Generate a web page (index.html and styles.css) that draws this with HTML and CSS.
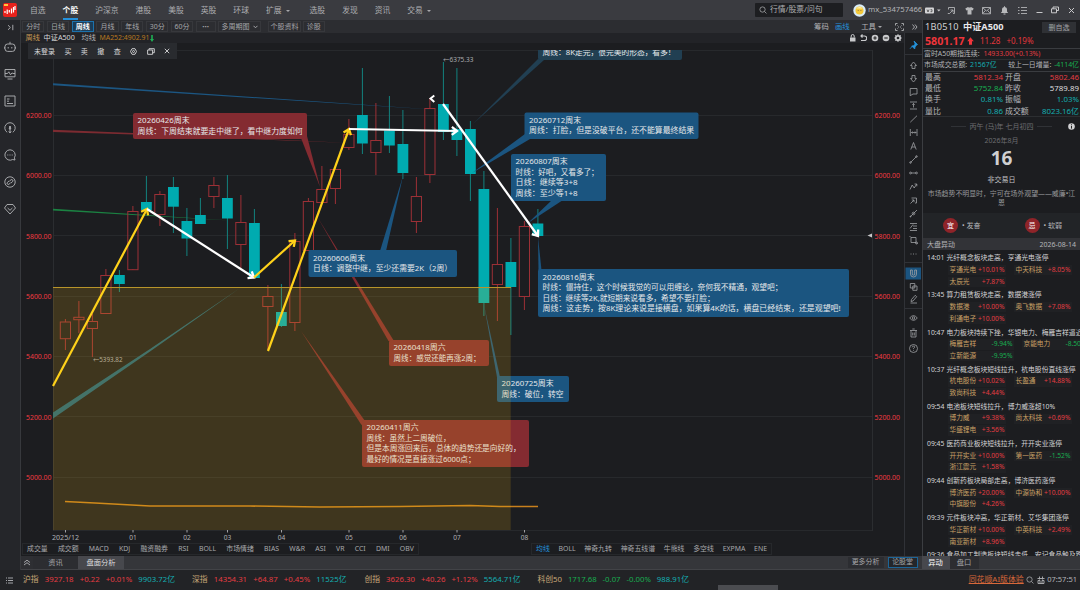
FILE: index.html
```html
<!DOCTYPE html>
<html lang="zh-CN">
<head>
<meta charset="utf-8">
<title>中证A500 周线</title>
<link rel="stylesheet" href="styles.css">
</head>
<body>
<svg class="defs" width="0" height="0">
  <defs>
    <symbol id="i-robot" viewBox="0 0 12 12"><path d="M6 3V.8M3.6 3h4.8A2.6 2.6 0 0 1 11 5.6v2.2a2.6 2.6 0 0 1-2.6 2.6H3.600A2.600 2.600 0 0 1 1 7.800V5.600A2.600 2.600 0 0 1 3.600 3zM4.200 6v1.500M7.800 6v1.500M.3 5.800v2M11.700 5.800v2"/></symbol>
    <symbol id="i-monitor" viewBox="0 0 12 12"><path d="M1 1.500h10v7.300H1zM3.500 11h5M1 5.500h2.500l1.300-1.700 1.700 3 1.500-2 .8.700H11"/></symbol>
    <symbol id="i-news" viewBox="0 0 12 12"><path d="M1 1h10v10H1zM3 4h2.500M3 6.200h2M3 8.500h6"/></symbol>
    <symbol id="i-gauge" viewBox="0 0 12 12"><path d="M3.200 10.300a5.200 5.200 0 1 1 5.600 0M6 4v7M4.800 9.300 6 11l1.200-1.700M6 4 5.200 7h1.600z"/></symbol>
    <symbol id="i-chat" viewBox="0 0 12 12"><path d="M6 .8a5.200 5.200 0 1 0 2.700 9.700l2.300.5-.6-2.200A5.200 5.200 0 0 0 6 .8zM3.300 6h1M5.500 6h1M7.700 6h1"/></symbol>
    <symbol id="i-link" viewBox="0 0 12 12"><circle cx="6" cy="6" r="5.200"/><path d="M5.300 5.200 7 3.800a1.200 1.200 0 0 1 1.500 1.900L7 7M6.700 6.800 5 8.200a1.200 1.200 0 0 1-1.500-1.900L5 5"/></symbol>
    <symbol id="i-gem" viewBox="0 0 12 12"><path d="M3 1.500h6L11.500 5 6 11 .5 5zM3.600 5 6 7.300 8.400 5"/></symbol>
    <symbol id="i-search" viewBox="0 0 10 10"><circle cx="4.400" cy="4.400" r="3.300"/><path d="m7 7 2.300 2.300"/></symbol>
  </defs>
</svg>
<div class="app">
  <header class="top">
    <div class="logo"><svg width="14" height="14" viewBox="0 0 14 14"><rect width="14" height="14" rx="2" fill="#e8221c"/><path d="M2 8v2M4.200 6.500V11M6.300 7v2.500M8.500 5.500v5M10.500 4v5.500M12 3v4" stroke="#fff" stroke-width="1.200"/><path d="M1 1h4v2H1z" fill="#ffc53d"/></svg></div>
    <nav class="nav">
      <span>自选</span><span class="on">个股</span><span>沪深京</span><span>港股</span><span>美股</span><span>英股</span><span>环球</span><span class="ext">扩展<i class="tri"></i></span><span>选股</span><span>发现</span><span>资讯</span><span>交易<i class="tri"></i></span>
    </nav>
    <div class="search"><svg class="ic" width="8" height="8"><use href="#i-search"/></svg>行情/股票/问句</div>
    <div class="user"><svg width="13" height="13" viewBox="0 0 13 13"><circle cx="6.500" cy="6.500" r="6.200" fill="#d9ecf7"/><circle cx="6.500" cy="6.500" r="4" fill="#f5c93a"/><path d="M3 4.500a4 3 0 0 1 7 0z" fill="#fff1b0"/><path d="M4.800 6.500h.8M7.500 6.500h.8" stroke="#654" stroke-width=".8"/></svg><span>mx_534757466</span></div>
    <div class="wins">
      <svg class="badge" width="17" height="9" viewBox="0 0 17 9"><rect x="0" y="1.500" width="9" height="6" rx="1" fill="#d5d5d7"/><path d="M2 3.500 3 6l1-2.500M5.500 3.700h1.500v2H5.500" stroke="#333" stroke-width=".7" fill="none"/><path d="m12 3.500 3.600 0-1.800 2z" fill="#c8c8ca"/></svg>
      <svg class="ic" width="9" height="9" viewBox="0 0 9 9"><path d="M1.500 3.500V1.500h6v6H6M.8 7.500h2M3.500 4h2.500v2.500M6 4 2.800 7.300"/></svg>
      <svg width="9" height="9" viewBox="0 0 9 9"><path d="M.3 2.500 3 1q1.500 1.200 3 0l2.700 1.500-1 2-1.200-.4V8.500h-4V4.100l-1.200.4z" fill="#b8b9bb"/></svg>
      <svg class="ic" width="9" height="9" viewBox="0 0 9 9"><path d="M.5 1.500h8v6.300h-8zM.5 1.500 4.500 5l4-3.500M.5 7.800l3-3.500M8.500 7.800l-3-3.500"/></svg>
      <svg width="9" height="9" viewBox="0 0 9 9"><path d="M.8 7 2 5.500V3.500a2.500 2.500 0 0 1 5 0v2L8.200 7zM3.500 7.500h2v1h-2zM4 .3h1v1H4z" fill="#b8b9bb"/></svg>
      <svg class="ic" width="9" height="9" viewBox="0 0 9 9"><path d="M0 1.500h1.500M3 1.500h6M0 4.500h1.500M3 4.500h6M0 7.500h1.500M3 7.500h6"/></svg>
      <svg class="ic lt" width="7" height="9" viewBox="0 0 7 9"><path d="M.5 6.500h6"/></svg>
      <svg class="ic lt" width="8" height="8" viewBox="0 0 8 8"><path d="M.5 2.800h5v4h-5zM2 2.800V1h5.500v3.500h-2"/></svg>
      <svg class="ic lt" width="7" height="7" viewBox="0 0 7 7"><path d="m1 1 5 5M6 1 1 6"/></svg>
    </div>
  </header>

  <div class="body">
    <aside class="side">
      <svg class="ic fold" width="7" height="7" viewBox="0 0 7 7"><path d="m1 1.200 2.400 2.300L1 5.800M5.800.8v5.400"/></svg>
      <svg class="ic" width="12" height="12"><use href="#i-robot"/></svg>
      <svg class="ic" width="12" height="12"><use href="#i-monitor"/></svg>
      <svg class="ic" width="12" height="12"><use href="#i-news"/></svg>
      <svg class="ic" width="12" height="12"><use href="#i-gauge"/></svg>
      <svg class="ic" width="12" height="12"><use href="#i-chat"/></svg>
      <svg class="ic" width="12" height="12"><use href="#i-link"/></svg>
      <svg class="ic" width="12" height="12"><use href="#i-gem"/></svg>
    </aside>

    <div class="work">
      <div class="upper">
        <main class="center">
          <div class="periods">
            <div class="plist"><b>分时</b><b>日线</b><b class="on">周线</b><b>月线</b><b>年线</b><b>30分</b><b>60分</b><b class="dots">•••</b><b class="wide">多周期图<svg class="ic" width="5" height="4" viewBox="0 0 5 4"><path d="m.5.8 2 2 2-2"/></svg></b><b class="info">个股资料</b><b>诊股</b></div>
            <div class="ptools"><span class="chip-dist">筹码</span><span class="blue draw">画线</span><span class="kit">工具<i class="tri small"></i></span>
              <svg class="ic full" width="9" height="8" viewBox="0 0 9 8"><path d="M.5 2.500v-2h2M6.500.5h2v2M8.500 5.500v2h-2M2.500 7.500h-2v-2M2.500 2.500l1 1M6.500 2.500l-1 1M2.500 5.500l1-1M6.500 5.500l-1-1"/></svg>
              <svg class="ic" width="6" height="8" viewBox="0 0 6 8"><path d="m.5 1.500 2 2.500-2 2.500M3 1.500 5 4 3 6.500"/></svg></div>
          </div>
          <div class="stage">
            <div class="chartcol">
              <div class="legend"><span class="gold">周线</span><span class="w">中证A500</span><span class="g">均线</span><span class="ma">MA252:4902.91</span><svg width="4" height="7" viewBox="0 0 4 7"><path d="M1.200 0h1.600v4H4L2 7 0 4h1.200z" fill="#1fae54"/></svg>
                <div class="ltools">
                  <svg width="7" height="8" viewBox="0 0 7 8"><path d="M1 3.500h5.500V7.500H1z" fill="#c9cacc"/><path d="M2.200 3.500V2a1.500 1.500 0 0 1 3 0v1.500" fill="none" stroke="#c9cacc"/></svg>
                  <svg width="7" height="8" viewBox="0 0 7 8"><path d="M1 2h3.500a2 2 0 0 1 0 4.500H1M2.500.5 1 2l1.500 1.500" fill="none" stroke="#c9cacc" stroke-width="1.200"/></svg>
                  <svg width="8" height="8" viewBox="0 0 8 8"><circle cx="4" cy="4" r="3.300" fill="#c9cacc"/><path d="M2.300 4h3.400M4 2.300v3.400" stroke="#222" stroke-width="1.100"/></svg>
                  <svg width="8" height="8" viewBox="0 0 8 8"><circle cx="4" cy="4" r="3.300" fill="#c9cacc"/><path d="M2.300 4h3.400" stroke="#222" stroke-width="1.100"/></svg>
                  <svg width="8" height="8" viewBox="0 0 8 8"><circle cx="4" cy="4" r="2.200" fill="none" stroke="#c9cacc" stroke-width="1.700"/><path d="M4 .3v1M4 6.700v1M.3 4h1M6.700 4h1M1.400 1.400l.7.700M5.900 5.900l.7.700M1.400 6.600l.7-.7M5.900 2.100l.7-.7" stroke="#c9cacc" stroke-width="1.200"/></svg>
                </div>
              </div>
              <div class="plot">
                <svg id="chart" width="884" height="500" viewBox="21 43 884 500"></svg>
                <div class="trade"><span>未登录</span><span>买</span><span>卖</span><span>撤</span><span>查</span>
                  <svg class="ic lt" width="7" height="7" viewBox="0 0 7 7"><path d="M2 .7h3l1.500 2.800L5 6.300H2L.5 3.500z"/><circle cx="3.500" cy="3.500" r="1"/></svg>
                  <svg class="ic lt" width="8" height="7" viewBox="0 0 8 7"><path d="M.6 2h5v4.300h-5zM2 2V.7h5.300v4H5.600"/></svg>
                  <svg class="ic lt" width="6" height="6" viewBox="0 0 6 6"><path d="m.8.8 4.400 4.400M5.200.8.8 5.200"/></svg>
                </div>
              </div>
              <div class="indicators">
                <div class="ind a"><span>成交量</span><span>成交额</span><span>MACD</span><span>KDJ</span><span>融资融券</span><span>RSI</span><span>BOLL</span><span>市场情绪</span><span>BIAS</span><span>W&amp;R</span><span>ASI</span><span>VR</span><span>CCI</span><span>DMI</span><span>OBV</span></div>
                <div class="ind b"><span class="blue">均线</span><span>BOLL</span><span>神奇九转</span><span>神奇五线谱</span><span>牛熊线</span><span>多空线</span><span>EXPMA</span><span>ENE</span></div>
              </div>
            </div>
            <svg class="tools" width="18" height="523" viewBox="904 33 18 523">
              <path d="M904.500 33v523" stroke="#303237"/>
              <path d="M905 54.500h17M905 262.500h17M905 308.500h17" stroke="#303237"/>
              <path d="m914 41 3.500 3.500-1 .5-1.500 2-.3 2-3-3 2-.3 1.500-1.700zM912.500 46l-2.500 2.800" fill="#2593dc" stroke="#2593dc" stroke-width=".8"/>
              <rect x="905.500" y="267.500" width="15.500" height="12" fill="#1b5480"/>
              <g class="ln">
                <path d="m913.500 62 3 3.500h-1.500v3h-3v-3h-1.500z"/>
                <path d="m913.500 82 3-3.500h-1.500v-3h-3v3h-1.500z"/>
                <path d="M910.200 88.500h6.800v5.500h-4l-2.800 1.700z"/>
                <path d="M910 102h7M910 109h7M913.500 103.500v4M912.300 104.800l1.200-1.300 1.200 1.300"/>
                <path d="m910.300 122.200 6.700-6.500"/>
                <path d="M910.300 129v7M917 129v7M911.500 132.500h4.500M912.500 131.500l-1 1 1 1M915 131.500l1 1-1 1"/>
                <path d="m910.800 149.500 2.700-7 2.700 7M911.800 147h3.400"/>
                <path d="m910.500 162.500 6-6"/><circle cx="910.500" cy="162.500" r=".8"/><circle cx="916.500" cy="156.500" r=".8"/>
                <path d="M911 173h5"/><circle cx="910.500" cy="173" r=".9"/><circle cx="916.500" cy="173" r=".9"/>
                <path d="m910 189.500 2.200-4.500 2 3 2.500-4M914.500 184h2.300v2.300"/>
                <path d="M911.500 198h5v5h-1.500M910.500 203.500l3.500-3.500M911.800 200h2.200v2.200"/>
                <path d="m910 217 7-7"/><circle cx="913.500" cy="213.500" r="1.300"/><circle cx="910.500" cy="216.500" r=".5"/>
                <path d="M910 223.500h7M913 226h4M913 228.500h4M910 230.500h7M910 228.500l3-4"/>
                <path d="M911 237.500h5v5h-5zM916 242.500l1.500 1.500M909.500 236l1.500 1.500"/><circle cx="916.500" cy="243" r="1"/>
                <path d="M910.500 254h1M913 254h1M915.500 254h1"/>
                <path d="M910.500 270v4a3 3 0 0 0 6 0v-4h-1.800v4a1.200 1.200 0 0 1-2.400 0v-4z"/>
                <path d="M910.300 283.500h4.500v4.500h-4.500zM912.800 286h4.200v4.300h-4.200z"/>
                <path d="m911 301.500.5-2 3.700-4.200 1.500 1.400-3.700 4.300zM910.500 303h6.500"/>
                <path d="M909.700 318q3.800-4.700 7.600 0-3.800 4.700-7.600 0z"/><circle cx="913.500" cy="318" r="1.200"/>
                <path d="M910 330.500h7M911 330.500v6.500h5v-6.500M912.300 329h2.400M912.700 332.500v3M914.300 332.500v3"/>
                <circle cx="913.500" cy="348.500" r="4"/><path d="M912.300 347.300q.1-1.200 1.200-1.200t1.200 1q0 .6-1.200 1.300v.7M913.500 350.200v.7"/>
              </g>
            </svg>
          </div>
        </main>

        <section class="quote">
          <div class="qname"><span class="code">1B0510</span><span class="nm">中证A500</span><button>删自选</button></div>
          <div class="qprice"><strong>5801.17</strong><svg width="7" height="8" viewBox="0 0 7 8"><path d="m3.500.3 3.300 3.900H5v3.500H2V4.200H.2z" fill="#f0353b"/></svg><span>11.28</span><span>+0.19%</span></div>
          <div class="qline"><span>富时A50期指连续:</span><span class="red">14933.00(+0.13%)</span></div>
          <div class="qline two"><span>市场成交总额: <em class="cy">21567亿</em></span><span>较上一日增量: <em class="gr">-4114亿</em></span></div>
          <div class="qgrid">
            <span>最高</span><em class="red">5812.34</em><span>开盘</span><em class="red">5802.46</em>
            <span>最低</span><em class="gr">5752.84</em><span>昨收</span><em class="wh">5789.89</em>
            <span>换手</span><em class="cy">0.81%</em><span>振幅</span><em class="cy">1.03%</em>
            <span>量比</span><em class="cy">0.86</em><span>成交额</span><em class="cy">8023.16亿</em>
          </div>
          <div class="cal">
            <div class="lunar"><i></i>丙午 (马)年 七月初四<i></i><svg class="tip" width="7" height="7" viewBox="0 0 7 7"><circle cx="3.500" cy="3.500" r="3.300" fill="#d0d0d2"/><path d="M3.500 1.300v1M3.500 3v2.600" stroke="#222"/></svg></div>
            <div class="ym">2026年8月</div>
            <div class="day">16</div>
            <div class="non">非交易日</div>
            <div class="say">市场趋势不明显时，宁可在场外观望——威廉•江恩</div>
          </div>
          <div class="luck"><div><b>宜</b>• 发奋</div><div><b>忌</b>• 软弱</div></div>
          <div class="mhead"><span>大盘异动</span><span>2026-08-14</span></div>
          <div class="feed" id="feed"></div>
        </section>
      </div>

      <div class="tabs">
        <span class="up"><svg class="ic" width="8" height="7" viewBox="0 0 8 7"><path d="m1 3.500 3-2.300 3 2.300M1 6l3-2.300L7 6"/></svg></span>
        <span class="t1">资讯</span><span class="t2">盘面分析</span>
        <span class="more">更多分析</span><span class="forum">论股堂</span>
        <span class="t3">异动</span><span class="t4">盘口</span>
      </div>
    </div>
  </div>

  <footer class="status">
    <svg class="ic menu" width="7" height="7" viewBox="0 0 7 7"><path d="M0 1h1M2 1h5M0 3.500h1M2 3.500h5M0 6h1M2 6h5"/></svg>
    <div class="ix x1 red"><b>沪指</b><span>3927.18</span><span>+0.22</span><span>+0.01%</span><em class="cy">9903.72亿</em></div>
    <div class="ix x2 red"><b>深指</b><span>14354.31</span><span>+64.87</span><span>+0.45%</span><em class="cy">11525亿</em></div>
    <div class="ix x3 red"><b>创指</b><span>3626.30</span><span>+40.26</span><span>+1.12%</span><em class="cy">5564.71亿</em></div>
    <div class="ix x4 gr"><b>科创50</b><span>1717.68</span><span>-0.07</span><span>-0.00%</span><em class="cy">988.91亿</em></div>
    <div class="right"><a>同花顺AI版体验</a><svg class="ic" width="8" height="8"><use href="#i-search"/></svg><svg class="ic" width="8" height="8" viewBox="0 0 8 8"><path d="M.5 2.500h7M2.500.5v3M5.500.5v3M1 4.500h2v3H1zM5 4.500h2v3H5zM3 7.500h2"/></svg><span>07:57:51</span></div>
    <i class="thumb"></i>
  </footer>
</div>
<script src="app.js"></script>
</body>
</html>
```
FILE: styles.css
```css
* { box-sizing: border-box; }
body {
  margin: 0; width: 1080px; height: 590px; overflow: hidden;
  background: #1c1d20; color: #b4b5b8;
  font-family: "Noto Sans", "Noto Sans CJK SC", sans-serif;
  font-size: 7.8px; line-height: 1; white-space: nowrap;
}
b { font-weight: 400; }
em, i { font-style: normal; }
svg { display: block; flex: none; }
.defs { position: absolute; }
.ic { fill: none; stroke: #acadb0; stroke-width: .95; }
.ic.lt { stroke: #d0d0d2; }
.red { color: #e23c42; }
.gr { color: #18ad50; }
.cy { color: #14adb1; }
.wh { color: #dcdcde; }
.blue { color: #2491dc; }
.app { display: flex; flex-direction: column; height: 590px; }

.top { height: 20px; display: flex; align-items: center; background: #3a3b40; }
.logo { width: 30px; padding-left: 3px; }
.nav { display: flex; gap: 17px; width: 725px; height: 20px; color: #adaeb1; }
.nav span { display: flex; align-items: center; padding-top: 1px; height: 20px; }
.nav .ext { margin-right: 1px; }
.nav .on { color: #fff; font-weight: 700; border-bottom: 2px solid #2491dc; padding-top: 3px; }
.tri { width: 0; height: 0; border: 2.200px solid transparent; border-top: 2.800px solid #a7a8ab; border-bottom: 0; margin: 0 2px 0 4px; }
.tri.small { margin: 0 0 0 2px; }
.search { width: 88px; height: 14px; background: #1d1e21; border-radius: 1px; display: flex; align-items: center; gap: 3px; padding-left: 4px; color: #aeafb2; font-size: 7.800px; }
.user { display: flex; align-items: center; gap: 2px; margin-left: 10px; width: 72px; color: #b4b5b8; font-size: 7.700px; }
.wins { flex: 1; display: flex; align-items: center; justify-content: space-between; padding: 0 5px 0 0; }
.badge { margin-right: -4px; }

.body { display: flex; height: 550px; }
.side { width: 21px; background: #25262a; border-right: 1px solid #37393d; display: flex; flex-direction: column; align-items: center; gap: 15px; }
.fold { margin: 4px 0 -5px; }
.work { width: 1059px; display: flex; flex-direction: column; }
.upper { display: flex; height: 536px; }
.center { width: 901px; }
.periods { height: 13px; background: #2c2d31; display: flex; align-items: center; justify-content: space-between; padding: 0 4px 0 1px; }
.plist { display: flex; gap: 2.500px; }
.plist b { height: 11px; width: 22.300px; border: 1px solid #37383c; display: flex; align-items: center; justify-content: center; gap: 3px; font-size: 7px; color: #a5a6a9; }
.plist .on { border-color: #1c72ad; color: #fff; font-weight: 700; background: #1b3d58; }
.plist .dots { width: 20px; font-size: 6px; }
.plist .wide { width: 43px; }
.plist .info { width: 33px; margin-left: 4.500px; }
.plist b:last-child { margin-left: -1px; }
.ptools { display: flex; align-items: center; font-size: 7.400px; }
.ptools span { display: flex; align-items: center; }
.ptools .draw { margin: 0 11.500px 0 6px; }
.ptools .full { margin: 0 8px 0 13px; }
.stage { display: flex; height: 523px; }
.chartcol { width: 883px; }
.legend { height: 10px; background: #222327; display: flex; align-items: center; padding-left: 4.500px; font-size: 7.200px; }
.legend .gold { color: #c99a55; width: 18px; }
.legend .w { color: #d8d8da; width: 38px; }
.legend .g { width: 18px; }
.legend .ma { color: #b87820; font-size: 6.900px; margin-right: .5px; }
.ltools { width: 53px; display: flex; justify-content: space-between; margin: 0 2px 0 auto; }
.plot { height: 500px; position: relative; overflow: hidden; }
.trade { position: absolute; left: 7px; top: 0; width: 149px; height: 16px; background: #292b2f; color: #d8d8da; display: flex; align-items: center; justify-content: space-between; padding: 0 7px 0 6px; font-size: 7px; }
.indicators { height: 13px; display: flex; gap: 112px; padding-left: 1px; }
.ind { display: flex; height: 12px; align-items: center; justify-content: space-between; border: 1px solid #26282b; font-size: 6.900px; color: #a8a9ac; }
.ind.a { width: 397px; padding: 0 4px; }
.ind.b { width: 241px; padding: 0 4px; }
.ln { fill: none; stroke: #a0a1a4; stroke-width: .8; }

.quote { width: 158px; border-left: 1px solid #3b3d41; overflow: hidden; height: 536px; }
.qname { height: 14px; display: flex; align-items: center; padding-left: 2px; font-size: 9.200px; color: #d0d0d2; }
.qname .code { width: 38px; letter-spacing: .25px; }
.qname .nm { font-weight: 700; color: #e8e8ea; width: 79px; }
.qname button { width: 34px; height: 11px; padding: 0; border: 0; background: #2f3135; color: #a2a3a6; font: inherit; font-size: 7px; }
.qprice { height: 15px; display: flex; align-items: center; padding-left: 2px; color: #e2363c; border-bottom: 1px solid #3a3c40; font-size: 8px; }
.qprice strong { font-size: 10.700px; width: 42px; color: #f0353b; }
.qprice span { margin-left: 6px; }
.qline { height: 11px; display: flex; align-items: center; gap: 4px; padding: 0 0 0 1px; font-size: 6.900px; border-bottom: 1px solid #2c2e31; }
.qline.two { justify-content: space-between; padding-right: 1px; height: 12px; border-color: #3a3c40; }
.qline.two em { margin-left: 1px; }
.qgrid { height: 45px; display: grid; grid-template-columns: 30px 48px 35px 41px; grid-auto-rows: 11.300px; align-items: center; padding: 0 2px; border-bottom: 1px solid #2c2e31; font-size: 7.900px; }
.qgrid em { text-align: right; }
.qgrid :nth-child(4n + 3) { padding-left: 2px; }
.cal { height: 96px; display: flex; flex-direction: column; align-items: center; color: #6c6d71; font-size: 7px; padding-top: 6px; }
.lunar { display: flex; align-items: center; gap: 4px; position: relative; width: 100%; justify-content: center; }
.lunar i { width: 15px; height: 1px; background: #303236; }
.tip { position: absolute; right: 5px; top: 0; }
.ym { margin-top: 7px; }
.day { font-size: 19px; font-weight: 700; color: #cfcfd1; margin-top: 5px; }
.non { color: #c0c0c2; margin-top: 8px; }
.say { color: #96979a; white-space: normal; text-align: center; width: 150px; line-height: 9.500px; margin-top: 5.500px; font-size: 6.900px; }
.luck { height: 25px; background: #222427; display: flex; padding-left: 20px; align-items: center; font-size: 7px; overflow: hidden; }
.luck div { flex: none; width: 81.500px; display: flex; align-items: center; gap: 4px; }
.luck div + div { width: 50px; }
.luck b { width: 15px; height: 15px; border-radius: 50%; background: #8f2429; color: #fff; display: flex; align-items: center; justify-content: center; }
.mhead { height: 12px; background: #323337; display: flex; align-items: center; justify-content: space-between; padding: 0 4px; font-size: 7px; }
.feed { padding: 2.500px 0 0 4px; }
.ev { height: 37.150px; }
.ev h4 { margin: 0; height: 12.500px; font-size: 6.800px; font-weight: 400; color: #d4d4d6; display: flex; align-items: center; }
.ev h4 span { width: 19.500px; flex: none; }
.chips { display: grid; grid-template-columns: 58px 58px; column-gap: 8px; row-gap: 1.500px; padding-left: 21px; }
.chips.far { grid-template-columns: 66px 66px; }
.chip { height: 10.300px; background: #202124; display: flex; align-items: center; justify-content: space-between; padding: 0 1.500px; font-size: 6.700px; color: #c9a065; }

.tabs { height: 14px; background: #35363a; display: flex; align-items: center; font-size: 7.300px; color: #a5a6a9; border-bottom: 1px solid #424347; }
.tabs span { height: 13px; display: flex; align-items: center; justify-content: center; }
.up { width: 12px; background: #2e2f33; }
.t1 { width: 45px; background: #2c2d31; }
.t2 { width: 46px; background: #47484d; color: #dcdcde; }
.tabs .more { width: 36px; height: 11px; background: #2c2d31; margin-left: 723.500px; font-size: 6.900px; }
.tabs .forum { width: 30px; height: 11px; border: 1px solid #1c6598; margin: 0 4px 0 4px; font-size: 6.900px; background: #24262a; }
.t3 { width: 28px; background: #47484d; color: #fff; }
.t4 { width: 29px; background: #2c2d31; }

.status { height: 20px; background: #222326; display: flex; padding: 4.500px 3px 0 6px; position: relative; font-size: 7.800px; }
.menu { margin: 2px 10px 0 0; }
.ix { display: flex; justify-content: space-between; height: 10px; align-items: center; margin-right: 17px; }
.ix b { color: #c9a878; }
.x1 { width: 152px; }
.x2 { width: 154.500px; margin-right: 18px; }
.x3 { width: 156px; }
.x4 { width: 151.500px; }
.right { flex: 1; display: flex; justify-content: flex-end; align-items: center; gap: 2.500px; height: 10px; font-size: 7.500px; }
.right a { color: #d8683a; text-decoration: underline; font-size: 7.900px; }
.thumb { position: absolute; left: 718px; bottom: 0; width: 60px; height: 5px; background: #4b4c50; }

#chart text { font-family: "Noto Sans", "Noto Sans CJK SC", sans-serif; }
```
FILE: app.js
```js
const out = [];
const line = (x1, y1, x2, y2, c, w) => out.push(`<path d="M${x1} ${y1}L${x2} ${y2}" stroke="${c}" stroke-width="${w || 1}" fill="none"/>`);
const poly = (p, c) => out.push(`<polygon points="${p}" fill="${c}"/>`);
const text = (x, y, s, c, size, w) => out.push(`<text x="${x}" y="${y}" fill="${c}" font-size="${size}"${w ? ` textLength="${w}" lengthAdjust="spacingAndGlyphs"` : ''}>${s}</text>`);

// Grid and price axis
[50.5, 115.5, 175.5, 235.5, 296.5, 356.5, 416.5, 477.5, 530.5].forEach(y => line(53, y, 872, y, '#27292c'));
[53.5, 872.5].forEach(x => line(x, 50, x, 531, '#2b2d30'));
['6200', '6000', '5800', '5600', '5400', '5200', '5000'].forEach((p, i) => {
  const y = 117.8 + i * 60.4;
  text(26, y, p + '.00', '#f03a41', 7.1, 25.5);
  text(874.5, y, p + '.00', '#f03a41', 7.1, 25.5);
});
poly('872,233.500 872,237.500 867.500,235.500', '#c8c8ca');

// Callout pointers that run off the left edge
poly('53,83.200 53,85.200 440,110', '#1c5682');
poly('53,129.800 53,132 133,134.500 350,143 133,133', '#7c2b31');
poly('53,208.700 53,210.500 230,220.500', '#1b8242');
poly('53,412.500 53,418.500 150,351.500 240,288 150,349', '#22657a');

// Weekly candles: [direction, body top, body bottom, high, low]
const candles = [
  ['r', 322, 338.7, 319, 350], ['r', 317.3, 319.7, 301, 333], ['r', 321.5, 328.5, 314, 357], ['r', 275.5, 313.5, 269, 313],
  ['t', 275, 284, 270, 292], ['r', 211.5, 269.7, 206, 269], ['t', 202, 210, 176, 210], ['r', 194.5, 214.5, 191, 226],
  ['t', 187, 206.7, 177, 233], ['t', 221, 238.5, 208, 256], ['t', 215, 224, 198, 224], ['r', 185.5, 196.5, 177, 208],
  ['t', 198, 218.5, 175, 249], ['r', 222.5, 244.5, 195, 268], ['t', 223, 278, 209, 278], ['r', 296.5, 306.5, 285, 350],
  ['t', 312, 326, 284, 327], ['r', 241.5, 322.5, 233, 331], ['r', 201.5, 250.5, 198, 250], ['r', 189.5, 202.5, 166, 202],
  ['r', 169.5, 188.5, 169, 204], ['r', 134.5, 147.5, 119, 150], ['t', 115, 143.5, 68, 154], ['r', 140.5, 152.5, 103, 175],
  ['t', 130.5, 145.5, 96, 153], ['t', 144, 173, 110, 179], ['r', 196.5, 221.5, 177, 233], ['r', 108.5, 174.5, 98, 183],
  ['t', 104, 132, 62, 140], ['t', 129, 140, 68, 156], ['t', 129, 174, 121, 201], ['t', 189, 303, 171, 316],
  ['r', 264.5, 284.5, 208, 321], ['t', 262, 287, 238, 335], ['r', 226.5, 296.5, 221, 310], ['t', 223.5, 236, 209, 236]
];
candles.forEach(([k, a, b, h, l], i) => {
  const x = 65.4 + i * 13.5;
  if (k === 't') {
    line(x, h, x, l, '#12827f');
    out.push(`<rect x="${x - 5.4}" y="${a}" width="10.8" height="${b - a}" fill="#00abb0"/>`);
  } else {
    line(x, h, x, a, '#9c3036');
    line(x, b, x, l, '#9c3036');
    out.push(`<rect x="${x - 5.1}" y="${a}" width="10.2" height="${b - a}" fill="none" stroke="#9c3036"/>`);
  }
});
text(443, 61.8, '←6375.33', '#a8a9ac', 6.2, 30.5);
text(93, 362.3, '←5393.82', '#a8a9ac', 6.2, 29.5);

// Callouts: box, pointer, lines of [text, width]
const BLUE = '#1b5580', RED = '#842b31';
const note = (x, y, w, h, c, tail, rows, top) => {
  poly(tail, c);
  out.push(`<rect x="${x}" y="${y}" width="${w}" height="${h}" rx="2" fill="${c}"/>`);
  rows.forEach(([s, tw], i) => text(x + 4.6, (top || y + 10.3) + i * 10.45, s, '#e6e8ea', 7.8, tw));
};
out.push('<clipPath id="top"><rect x="500" y="50" width="200" height="20"/></clipPath><g clip-path="url(#top)">');
note(538, 40, 144, 20, '#213f52', '0,0', [['周线：8K走完，很完美的形态，看多！', 133]], 55);
out.push('</g>');
poly('538,59 544,60 473,124', '#213f52');
note(133, 113, 174, 26, RED, '301,138 307,136 320,187', [['20260426周末', 52], ['周线：下周结束就要走中继了，看中继力度如何', 165]]);
note(524.5, 112.5, 174, 26.5, BLUE, '525,134 530,139 472,173', [['20260712周末', 52], ['周线：打脸，但是没破平台，还不能算最终结果', 165]]);
note(511, 154, 95, 47, BLUE, '552,200 563,200 528,223', [['20260807周末', 52], ['时线：好吧，又看多了；', 83], ['日线：继续等3+8', 62], ['周线：至少等1+8', 62]]);
note(389, 340, 100, 26, RED, '388.500,341 394,341 318,218', [['20260418周六', 52], ['周线：感觉还能再涨2周；', 87]]);
note(308.5, 250, 148.5, 27, BLUE, '380,251 386,251 403,176', [['20260606周末', 52], ['日线：调整中继，至少还需要2K（2周）', 139]], 261);
note(538, 269, 311, 48, BLUE, '538.500,270 541.500,270 538,237', [['20260816周末', 52], ['时线：僵持住，这个时候我觉的可以用缠论，奈何我不精通，观望吧；', 240], ['日线：继续等2K,就短期来说看多，希望不要打脸；', 172], ['周线：这走势，按8K理论来说是接横盘，如果算4K的话，横盘已经结束，还是观望吧!', 298]], 280);
note(497, 376, 72, 26, BLUE, '497.500,380 500,377 484,305', [['20260725周末', 52], ['周线：破位，转空', 62]]);
note(362, 420, 167, 47, RED, '361.500,425 365,421 301,331', [['20260411周六', 52], ['周线：虽然上二周破位，', 84], ['但是本周涨回来后，总体的趋势还是向好的，', 154], ['最好的情况是直接涨过6000点；', 109]]);

// Moving average and the highlighted price zone
out.push('<path d="M65 501.500 95 503 150 506 250 506 320 507 400 506.500 470 505.500 500 506.500 538 506.500" fill="none" stroke="#c8801c" stroke-width="1.600"/>');
out.push('<rect x="53" y="287.500" width="457.700" height="242.500" fill="#ffbe14" fill-opacity=".155"/>');
line(53, 287.5, 511, 287.5, '#b8952a', 1.2);

// Trend arrows
const arrow = (x1, y1, x2, y2, c) => {
  line(x1, y1, x2, y2, c, 2.2);
  const a = Math.atan2(y2 - y1, x2 - x1), p = d => `${x2 - 6.5 * Math.cos(a + d)} ${y2 - 6.5 * Math.sin(a + d)}`;
  out.push(`<path d="M${p(.65)}L${x2} ${y2}L${p(-.65)}" fill="none" stroke="${c}" stroke-width="2.300"/>`);
};
arrow(53, 386, 147, 209, '#ffd21a');
arrow(147, 209, 254, 277.5, '#fff');
arrow(254, 277.5, 295, 240.5, '#ffd21a');
arrow(268, 351, 349, 129, '#ffd21a');
arrow(349, 129, 457, 131, '#fff');
arrow(443, 104, 538, 236, '#fff');
out.push('<path d="M434.300 95.500 430.500 98.500 434.300 102" fill="none" stroke="#fff" stroke-width="2"/>');

// Month axis
[['2025/12', 65.5, 27], ['01', 133, 7.5], ['02', 187, 7.5], ['03', 227.5, 7.5], ['04', 281.5, 7.5], ['05', 349, 7.5], ['06', 403, 7.5], ['07', 457, 7.5], ['08', 524.5, 7.5]].forEach(([s, x, w]) => {
  line(x, 530, x, 532.5, '#a0a1a4');
  text(x - w / 2, 540, s, '#b0b1b4', 6.8, w);
});
document.getElementById('chart').innerHTML = out.join('');

// Market events
const events = [
  ['14:01', '光纤概念板块走高，亨通光电涨停', '亨通光电', '+10.01%', '中天科技', '+8.05%', '太辰光', '+7.87%'],
  ['13:45', '算力租赁板块走高，数据港涨停', '数据港', '+10.00%', '奥飞数据', '+7.08%', '利通电子', '+10.00%'],
  ['10:47', '电力板块持续下挫，华银电力、梅雁吉祥逼近跌停', '梅雁吉祥', '-9.94%', '京能电力', '-8.50%', '立新能源', '-9.95%'],
  ['10:37', '光纤概念板块短线拉升，杭电股份直线涨停', '杭电股份', '+10.02%', '长盈通', '+14.88%', '致尚科技', '+4.44%'],
  ['09:54', '电池板块短线拉升，博力威涨超10%', '博力威', '+9.38%', '尚太科技', '+0.69%', '华盛锂电', '+3.56%'],
  ['09:45', '医药商业板块短线拉升，开开实业涨停', '开开实业', '+10.00%', '第一医药', '-1.52%', '浙江震元', '+1.58%'],
  ['09:44', '创新药板块局部走高，博济医药涨停', '博济医药', '+20.00%', '中源协和', '+10.00%', '中旗股份', '+4.26%'],
  ['09:39', '元件板块冲高，华正新材、艾华集团涨停', '华正新材', '+10.00%', '中英科技', '+2.49%', '南亚新材', '+8.96%'],
  ['09:36', '食品加工制造板块短线走低，安记食品触及跌停']
];
document.getElementById('feed').innerHTML = events.map(([t, title, ...c]) => {
  let chips = '';
  for (let i = 0; i < c.length; i += 2) chips += `<div class="chip"><span>${c[i]}</span><span class="${c[i + 1][0] === '-' ? 'gr' : 'red'}">${c[i + 1]}</span></div>`;
  return `<div class="ev"><h4><span>${t}</span>${title}</h4><div class="chips${t === '10:47' ? ' far' : ''}">${chips}</div></div>`;
}).join('');
```
